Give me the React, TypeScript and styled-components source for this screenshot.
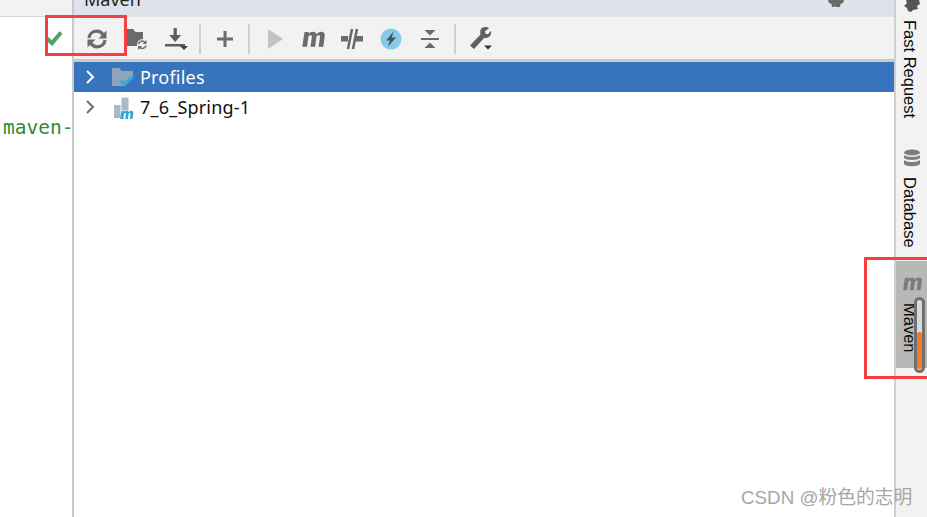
import React from 'react';
import styled, { createGlobalStyle } from 'styled-components';

const GlobalStyle = createGlobalStyle`
    html, body {
        margin: 0;
        padding: 0;
        background: #ffffff;
        overflow: hidden;
    }
`;

const Page = styled.div`
    position: relative;
    display: flex;
    width: 927px;
    height: 517px;
    overflow: hidden;
    font-family: "Noto Sans", "Liberation Sans", sans-serif;
`;

const Editor = styled.div`
    flex: 0 0 72px;
    min-width: 0;
    display: flex;
    flex-direction: column;
    background: #ffffff;
    border-right: 2px solid #c9c9c9;
    overflow: hidden;
`;

const EditorTabs = styled.div`
    height: 16px;
    background: #f2f2f2;
    border-bottom: 1px solid #d4d4d4;
`;

const EditorBody = styled.div`
    display: flex;
    flex-direction: column;
    align-items: flex-end;
    padding-top: 13px;
`;

const StatusIcon = styled.svg`
    width: 18px;
    height: 16px;
    margin-right: 9px;
`;

const CodeText = styled.div`
    align-self: flex-start;
    margin: 70px 0 0 3px;
    font-family: "DejaVu Sans Mono", "Liberation Mono", monospace;
    font-size: 19.500px;
    line-height: 24px;
    color: #2f8a34;
    white-space: nowrap;
`;

const Panel = styled.div`
    flex: 1;
    display: flex;
    flex-direction: column;
    min-width: 0;
`;

const PanelTitle = styled.div`
    height: 17px;
    background: #dfe2eb;
    display: flex;
    align-items: flex-start;
    justify-content: space-between;
    padding: 0 48px 0 10px;
    overflow: hidden;
    font-size: 18px;
    color: #222222;
`;

const TitleText = styled.span`
    display: block;
    line-height: 22px;
    margin-top: -12px;
`;

const GearClip = styled.svg`
    width: 20px;
    height: 8px;
`;

const Toolbar = styled.div`
    height: 40px;
    padding-top: 2px;
    background: #f2f2f2;
    border-bottom: 3px solid #c9c9c9;
    display: flex;
    align-items: center;
    padding-left: 11px;
`;

const ToolButton = styled.button<{ $w: number }>`
    width: ${p => p.$w}px;
    height: 40px;
    padding: 0;
    border: 0;
    background: none;
    display: flex;
    align-items: center;
    justify-content: center;
    flex: none;
`;

const ToolSeparator = styled.div`
    width: 2px;
    height: 30px;
    background: #d0d0d0;
    flex: none;
`;

const Tree = styled.div`
    display: flex;
    flex-direction: column;
    background: #ffffff;
    flex: 1;
`;

const TreeRow = styled.div<{ $selected?: boolean }>`
    height: 30px;
    display: flex;
    align-items: center;
    padding-left: 11px;
    background: ${p => (p.$selected ? '#3873bd' : 'transparent')};
    color: ${p => (p.$selected ? '#ffffff' : '#111111')};
    font-size: 18px;
    letter-spacing: 0.2px;
`;

const TreeArrow = styled.svg`
    width: 10px;
    height: 16px;
    flex: none;
`;

const TreeIcon = styled.svg`
    width: 24px;
    height: 24px;
    margin-left: 16px;
    margin-right: 5px;
    flex: none;
`;

const SideStrip = styled.div`
    flex: 0 0 31px;
    display: flex;
    flex-direction: column;
    background: #f2f2f2;
    border-left: 2px solid #cfcfcf;
`;

const SideTab = styled.div<{ $active?: boolean; $top: number; $h: number; $pad?: number; $gap: number }>`
    margin-top: ${p => p.$top}px;
    height: ${p => p.$h}px;
    box-sizing: border-box;
    padding-top: ${p => p.$pad ?? 0}px;
    display: flex;
    flex-direction: column;
    align-items: center;
    gap: ${p => p.$gap}px;
    background: ${p => (p.$active ? '#b8b8b6' : 'transparent')};
`;

const SideIcon = styled.svg`
    flex: none;
`;

const SideLabel = styled.span`
    writing-mode: vertical-rl;
    font-family: "Liberation Sans", sans-serif;
    font-size: 16.500px;
    line-height: 22px;
    margin-right: 3px;
    color: #0c0c0c;
    white-space: nowrap;
`;

const RedFrame = styled.div<{ $x: number; $y: number; $w: number; $h: number }>`
    position: absolute;
    left: ${p => p.$x}px;
    top: ${p => p.$y}px;
    width: ${p => p.$w}px;
    height: ${p => p.$h}px;
    box-sizing: border-box;
    border: 3px solid #f6403f;
`;

const Scrollbar = styled.div`
    position: absolute;
    left: 914px;
    top: 297px;
    width: 11px;
    height: 76px;
    box-sizing: border-box;
    border: 3px solid #6f7070;
    border-radius: 6px;
    background: #d9dadc;
    display: flex;
    align-items: flex-end;
    justify-content: center;
    padding-bottom: 1px;
`;

const ScrollThumb = styled.div`
    width: 5px;
    height: 37px;
    border-radius: 2px;
    background: #f37a26;
`;

const Watermark = styled.div`
    position: absolute;
    left: 741px;
    top: 486px;
    font-family: "Liberation Sans", "Noto Sans CJK SC", sans-serif;
    font-size: 18.800px;
    line-height: 24px;
    color: #a6a6a6;
    white-space: nowrap;
`;

const MavenGlyph = ({ fill, size }: { fill: string; size: number }) => (
    <SideIcon width={size} height={size * 0.7} viewBox="0 0 24 17">
        <path
            fill={fill}
            d="M3.400 1h4.400l-.3 1.900C8.700 1.600 10.200.700 12 .700c1.900 0 3.200 1 3.500 2.500C16.800 1.700 18.500.700 20.400.700c2.600 0 3.900 1.800 3.400 4.400L22.400 16h-4.700l1.300-9.600c.2-1.300-.2-2-1.300-2-1.200 0-2.100.9-2.300 2.300L14.100 16H9.500l1.300-9.600c.2-1.300-.2-2-1.300-2-1.200 0-2.100.9-2.300 2.300L5.900 16H1.200z"
        />
    </SideIcon>
);

export default function App() {
    return (
        <Page>
            <GlobalStyle />
            <Editor>
                <EditorTabs />
                <EditorBody>
                    <StatusIcon viewBox="0 0 18 16">
                        <path fill="none" stroke="#4ea35f" strokeWidth="4" d="M2 8.500l5 4.600L16 2.500" />
                    </StatusIcon>
                    <CodeText>maven-</CodeText>
                </EditorBody>
            </Editor>

            <Panel>
                <PanelTitle>
                    <TitleText>Maven</TitleText>
                    <GearClip viewBox="0 0 20 8">
                        <path fill="#6b6b6b" d="M2 0h16l-1 3-2.500 1-.5 3h-4l-1-1-1 1H6l-.5-3L3 3z" />
                    </GearClip>
                </PanelTitle>

                <Toolbar>
                    <ToolButton $w={24} aria-label="Reload">
                        <svg width="22" height="22" viewBox="0 0 22 22">
                            <path
                                fill="none"
                                stroke="#6b6b6b"
                                strokeWidth="3.200"
                                d="M3 10c.4-4 3.600-6.800 7.800-6.800 2.800 0 4.800 1.200 6.200 3.300M19 12c-.4 4-3.600 6.800-7.800 6.800-2.800 0-4.800-1.200-6.200-3.300"
                            />
                            <path fill="#6b6b6b" d="M20.500 2.500v8h-8zM1.500 19.500v-8h8z" />
                        </svg>
                    </ToolButton>
                    <ToolButton $w={54} aria-label="Generate sources">
                        <svg width="26" height="26" viewBox="0 0 26 26">
                            <path fill="#6b6b6b" d="M2 3h8l2.500 3H20v7a6 6 0 0 0-6 7H2z" />
                            <path
                                fill="none"
                                stroke="#6b6b6b"
                                strokeWidth="1.500"
                                d="M15.500 18a3.700 3.700 0 0 1 6.500-1.500M23 19.500a3.700 3.700 0 0 1-6.500 1.500"
                            />
                            <path fill="#6b6b6b" d="M23.500 14v4h-4zM15 24v-4h4z" />
                        </svg>
                    </ToolButton>
                    <ToolButton $w={26} aria-label="Download">
                        <svg width="24" height="24" viewBox="0 0 24 24">
                            <path fill="#5e5e5e" d="M9.600 1h3.200v7h4.400l-6 7-6-7h4.400zM1 17h20v2.600H1z" />
                            <path fill="#3c3c3c" d="M16 19h8l-4 4z" />
                        </svg>
                    </ToolButton>
                    <ToolButton $w={10} as="div" />
                    <ToolSeparator />
                    <ToolButton $w={47} aria-label="Add">
                        <svg width="16" height="16" viewBox="0 0 16 16">
                            <path fill="#6b6b6b" d="M6.500 0h3v6.500H16v3H9.500V16h-3V9.500H0v-3h6.500z" />
                        </svg>
                    </ToolButton>
                    <ToolSeparator />
                    <ToolButton $w={49} aria-label="Run">
                        <svg width="16" height="20" viewBox="0 0 16 20">
                            <path fill="#c2c2c2" d="M1 0l15 10L1 20z" />
                        </svg>
                    </ToolButton>
                    <ToolButton $w={28} aria-label="Execute goal">
                        <MavenGlyph fill="#6b6b6b" size={24} />
                    </ToolButton>
                    <ToolButton $w={49} aria-label="Toggle offline">
                        <svg width="22" height="22" viewBox="0 0 22 22">
                            <path fill="#6b6b6b" d="M0 8h7v5.500H0zM15 8h7v5.500h-7z" />
                            <path fill="none" stroke="#6b6b6b" strokeWidth="2.600" d="M11 1L7 21M16 1l-4 20" />
                        </svg>
                    </ToolButton>
                    <ToolButton $w={30} aria-label="Skip tests">
                        <svg width="22" height="22" viewBox="0 0 22 22">
                            <circle cx="11" cy="11" r="10.500" fill="#86c9e8" />
                            <path fill="#3f5560" d="M13.500 3.500L6 12.500h4L8 18.500l8-9h-4.200z" />
                        </svg>
                    </ToolButton>
                    <ToolButton $w={48} aria-label="Collapse all">
                        <svg width="20" height="20" viewBox="0 0 20 20">
                            <path fill="#6b6b6b" d="M4.500 1h11L10 6.500zM1 9h18v2H1zM10 13.500L15.500 19h-11z" />
                        </svg>
                    </ToolButton>
                    <ToolSeparator />
                    <ToolButton $w={48} aria-label="Settings">
                        <svg width="26" height="26" viewBox="0 0 26 26">
                            <path
                                fill="#5f5f5f"
                                d="M15.500 1.500c2.500-1 5.300-.5 6.500.8l-4 3 .5 2.500 2.500.5 3-3.500c.6 2.500-.2 5-2 6.300-1.500 1-3.300 1.200-4.700.6L7 23l-4-3.500 10.500-11c-.9-2.500-.2-5.700 2-7z"
                            />
                            <path fill="#333333" d="M17 19.500h8l-4 4z" />
                        </svg>
                    </ToolButton>
                </Toolbar>

                <Tree>
                    <TreeRow $selected>
                        <TreeArrow viewBox="0 0 10 16">
                            <path fill="none" stroke="#ffffff" strokeWidth="2" d="M2 2l6 6-6 6" />
                        </TreeArrow>
                        <TreeIcon viewBox="0 0 24 24">
                            <path fill="#8ea4b8" d="M1 3h7l3 3h11v6l-8 9H1z" />
                            <path fill="none" stroke="#3fa6dd" strokeWidth="3.200" d="M9.500 15.500l4 4 8.500-8.500" />
                        </TreeIcon>
                        Profiles
                    </TreeRow>
                    <TreeRow>
                        <TreeArrow viewBox="0 0 10 16">
                            <path fill="none" stroke="#6e6e6e" strokeWidth="2" d="M2 2l6 6-6 6" />
                        </TreeArrow>
                        <TreeIcon viewBox="0 0 24 24">
                            <path fill="#a9bac6" d="M10.500 2.500h7v13h-7zM3 10h6.500v13H3z" />
                            <path
                                fill="#36a6d8"
                                transform="translate(-1 2)"
                                d="M11.500 14h3l-.1 1c.7-.8 1.500-1.200 2.400-1.200 1 0 1.700.5 2 1.300.7-.8 1.600-1.300 2.500-1.300 1.500 0 2.200 1 2 2.500l-.8 6h-2.700l.7-5.300c.1-.6-.1-1-.6-1-.7 0-1.200.5-1.300 1.300l-.7 5h-2.700l.7-5.300c.1-.6-.1-1-.6-1-.7 0-1.200.5-1.300 1.300l-.7 5H10z"
                            />
                        </TreeIcon>
                        7_6_Spring-1
                    </TreeRow>
                </Tree>
            </Panel>

            <SideStrip>
                <SideTab $top={0} $h={118} $gap={8}>
                    <SideIcon width="18" height="12" viewBox="0 0 18 12">
                        <path fill="#555555" d="M3 0h13l1 4-3 2 1 3-5 1-2 2-3-1-1-3-3-2 3-3z" />
                    </SideIcon>
                    <SideLabel>Fast Request</SideLabel>
                </SideTab>
                <SideTab $top={31} $h={100} $gap={9}>
                    <SideIcon width="18" height="19" viewBox="0 0 18 19">
                        <ellipse cx="9" cy="3.500" rx="8" ry="3" fill="#7d7d7d" />
                        <path fill="#7d7d7d" d="M1 6c2 2.500 14 2.500 16 0v3c-2 2.500-14 2.500-16 0zM1 11c2 2.500 14 2.500 16 0v4c-2 3-14 3-16 0z" />
                    </SideIcon>
                    <SideLabel>Database</SideLabel>
                </SideTab>
                <SideTab $active $top={12} $h={107} $pad={16} $gap={12}>
                    <MavenGlyph fill="#7b7b7b" size={20} />
                    <SideLabel>Maven</SideLabel>
                </SideTab>
            </SideStrip>

            <RedFrame $x={45} $y={15} $w={82} $h={41} />
            <RedFrame $x={864} $y={257} $w={66} $h={122} />
            <Scrollbar>
                <ScrollThumb />
            </Scrollbar>
            <Watermark>CSDN @粉色的志明</Watermark>
        </Page>
    );
}
